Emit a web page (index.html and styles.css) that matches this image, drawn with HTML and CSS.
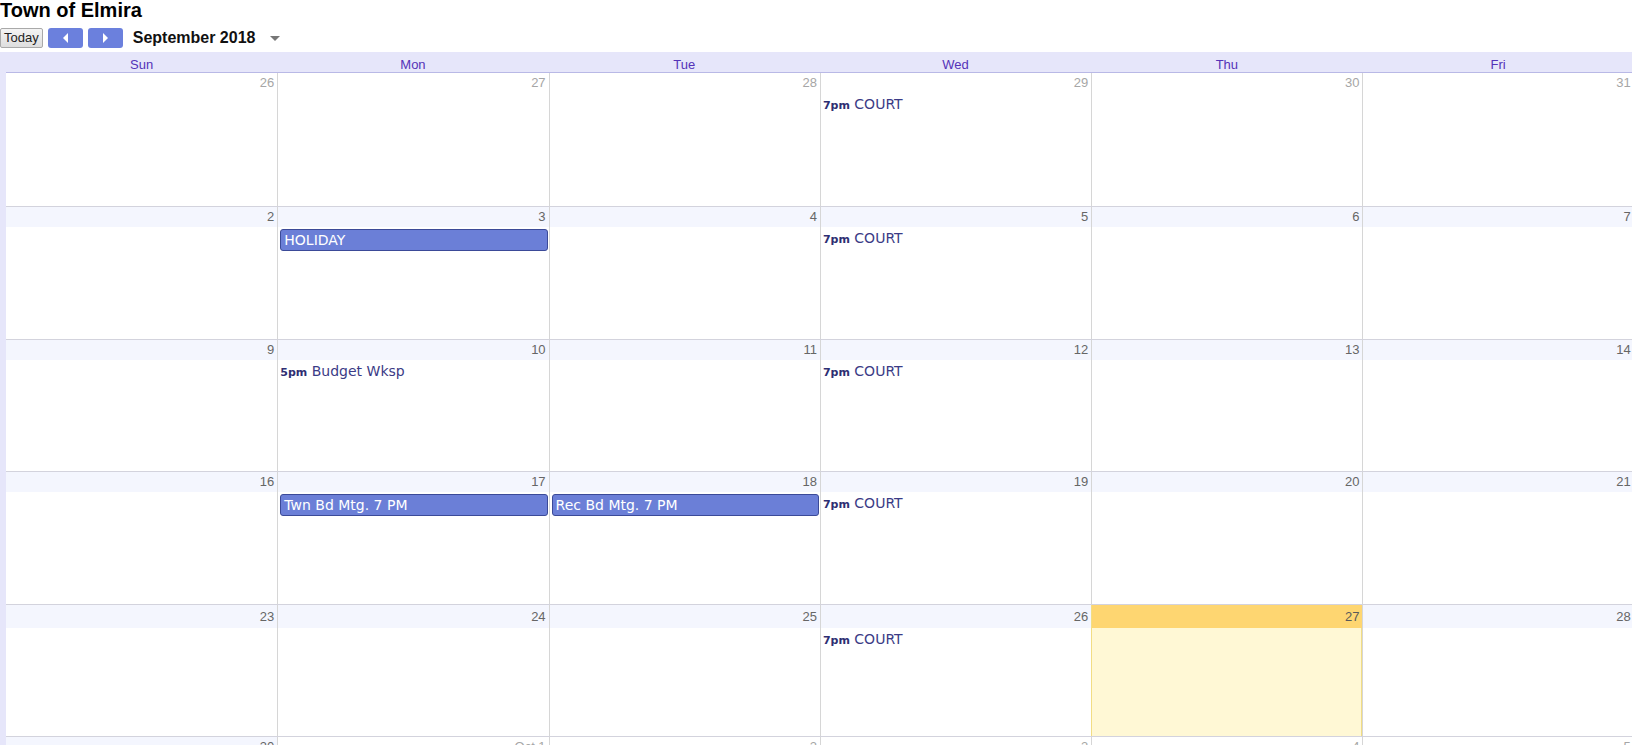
FILE: index.html
```html
<!DOCTYPE html>
<html>
<head>
<meta charset="utf-8">
<link rel="stylesheet" href="styles.css">
</head>
<body>
<div class="title">Town of Elmira</div>
<div class="toolbar">
  <button class="today-btn">Today</button>
  <button class="nav-btn"><span class="tri-left"></span></button>
  <button class="nav-btn"><span class="tri-right"></span></button>
  <span class="month">September 2018</span>
  <span class="dropdown"></span>
</div>
<div class="calendar">
  <div class="dayhead">
    <div>Sun</div><div>Mon</div><div>Tue</div><div>Wed</div><div>Thu</div><div>Fri</div><div>Sat</div>
  </div>

  <div class="week first">
    <div class="cell out"><div class="num">26</div></div>
    <div class="cell out"><div class="num">27</div></div>
    <div class="cell out"><div class="num">28</div></div>
    <div class="cell out"><div class="num">29</div><div class="ev"><b>7pm</b> COURT</div></div>
    <div class="cell out"><div class="num">30</div></div>
    <div class="cell out"><div class="num">31</div></div>
    <div class="cell"><div class="num">1</div></div>
  </div>

  <div class="week">
    <div class="cell"><div class="num">2</div></div>
    <div class="cell"><div class="num">3</div><div class="chip">HOLIDAY</div></div>
    <div class="cell"><div class="num">4</div></div>
    <div class="cell"><div class="num">5</div><div class="ev"><b>7pm</b> COURT</div></div>
    <div class="cell"><div class="num">6</div></div>
    <div class="cell"><div class="num">7</div></div>
    <div class="cell"><div class="num">8</div></div>
  </div>

  <div class="week">
    <div class="cell"><div class="num">9</div></div>
    <div class="cell"><div class="num">10</div><div class="ev"><b>5pm</b> Budget Wksp</div></div>
    <div class="cell"><div class="num">11</div></div>
    <div class="cell"><div class="num">12</div><div class="ev"><b>7pm</b> COURT</div></div>
    <div class="cell"><div class="num">13</div></div>
    <div class="cell"><div class="num">14</div></div>
    <div class="cell"><div class="num">15</div></div>
  </div>

  <div class="week">
    <div class="cell"><div class="num">16</div></div>
    <div class="cell"><div class="num">17</div><div class="chip">Twn Bd Mtg. 7 PM</div></div>
    <div class="cell"><div class="num">18</div><div class="chip">Rec Bd Mtg. 7 PM</div></div>
    <div class="cell"><div class="num">19</div><div class="ev"><b>7pm</b> COURT</div></div>
    <div class="cell"><div class="num">20</div></div>
    <div class="cell"><div class="num">21</div></div>
    <div class="cell"><div class="num">22</div></div>
  </div>

  <div class="week tall">
    <div class="cell"><div class="num">23</div></div>
    <div class="cell"><div class="num">24</div></div>
    <div class="cell"><div class="num">25</div></div>
    <div class="cell"><div class="num">26</div><div class="ev"><b>7pm</b> COURT</div></div>
    <div class="cell today"><div class="num">27</div></div>
    <div class="cell"><div class="num">28</div></div>
    <div class="cell"><div class="num">29</div></div>
  </div>

  <div class="week">
    <div class="cell"><div class="num">30</div></div>
    <div class="cell out"><div class="num">Oct 1</div></div>
    <div class="cell out"><div class="num">2</div></div>
    <div class="cell out"><div class="num">3</div></div>
    <div class="cell out"><div class="num">4</div></div>
    <div class="cell out"><div class="num">5</div></div>
    <div class="cell out"><div class="num">6</div></div>
  </div>
</div>
</body>
</html>
```

FILE: styles.css
```css
html, body {
  margin: 0;
  padding: 0;
  overflow: hidden;
  background: #fff;
  font-family: "Liberation Sans", Arial, sans-serif;
}

.title {
  font-size: 20px;
  font-weight: bold;
  color: #000;
  height: 24px;
  line-height: 20px;
  white-space: nowrap;
}

.toolbar {
  display: flex;
  align-items: center;
  height: 21px;
  margin-top: 3px;
  margin-bottom: 4px;
  white-space: nowrap;
}

.today-btn {
  height: 20px;
  padding: 0 3px;
  margin: 0;
  border: 1px solid #a9a9a9;
  border-radius: 2px;
  background: linear-gradient(#f4f4f4, #dedede);
  font-family: "Liberation Sans", Arial, sans-serif;
  font-size: 13px;
  color: #222;
  line-height: 18px;
}

.nav-btn {
  width: 35px;
  height: 20px;
  margin: 0 0 0 5px;
  padding: 0;
  border: none;
  border-radius: 3px;
  background: #6b80dd;
  display: flex;
  align-items: center;
  justify-content: center;
}

.tri-left {
  width: 0;
  height: 0;
  border-top: 5px solid transparent;
  border-bottom: 5px solid transparent;
  border-right: 5px solid #fff;
}

.tri-right {
  width: 0;
  height: 0;
  border-top: 5px solid transparent;
  border-bottom: 5px solid transparent;
  border-left: 5px solid #fff;
}

.month {
  margin-left: 10px;
  font-size: 16px;
  font-weight: bold;
  color: #111;
}

.dropdown {
  margin-left: 15px;
  margin-top: 2px;
  width: 0;
  height: 0;
  border-left: 5px solid transparent;
  border-right: 5px solid transparent;
  border-top: 5px solid #777;
}

.calendar {
  background: #e6e6fa;
  padding-left: 6px;
  width: 1900px;
}

.dayhead {
  display: grid;
  grid-template-columns: repeat(7, 271.3px);
  height: 20px;
  border-bottom: 1px solid #b9b9e6;
}

.dayhead div {
  text-align: center;
  font-size: 13px;
  padding-top: 5px;
  line-height: 15px;
  color: #5433b8;
}

.week {
  display: grid;
  grid-template-columns: repeat(7, 271.3px);
  height: 132.6px;
  box-sizing: border-box;
  border-top: 1px solid #d3d3dd;
  background: #fff;
}

.week.first {
  height: 133px;
  border-top: none;
}

.cell {
  border-left: 1px solid #d6d6d6;
  display: flex;
  flex-direction: column;
  min-width: 0;
}

.cell:first-child {
  border-left: none;
}

.num {
  height: 20px;
  line-height: 20px;
  text-align: right;
  padding-right: 3px;
  font-size: 13px;
  color: #666;
  background: #f4f6fe;
  margin-bottom: 1px;
}

.week.tall .num {
  height: 23px;
  line-height: 23px;
}

.cell.out .num {
  background: #fff;
  color: #a6a6a6;
}

.cell.today {
  background: #fff8d5;
  border: 1px solid #f2dd84;
  border-top: none;
  border-bottom: none;
}

.cell.today .num {
  background: #fed671;
  color: #5a5a5a;
  margin-right: -1px;
}

.ev {
  font-family: "DejaVu Sans", Verdana, sans-serif;
  font-size: 14px;
  line-height: 21px;
  color: #3b3b86;
  padding-left: 2px;
  white-space: nowrap;
  overflow: hidden;
}

.ev b {
  font-size: 11px;
  color: #2e2e72;
}

.chip {
  font-family: "DejaVu Sans", Verdana, sans-serif;
  font-size: 14px;
  line-height: 20px;
  height: 20px;
  color: #fff;
  background: #6b7fd7;
  border: 1px solid #3b4a98;
  border-radius: 3px;
  margin: 1px 1px 0 2px;
  padding-left: 3px;
  white-space: nowrap;
  overflow: hidden;
}
```
